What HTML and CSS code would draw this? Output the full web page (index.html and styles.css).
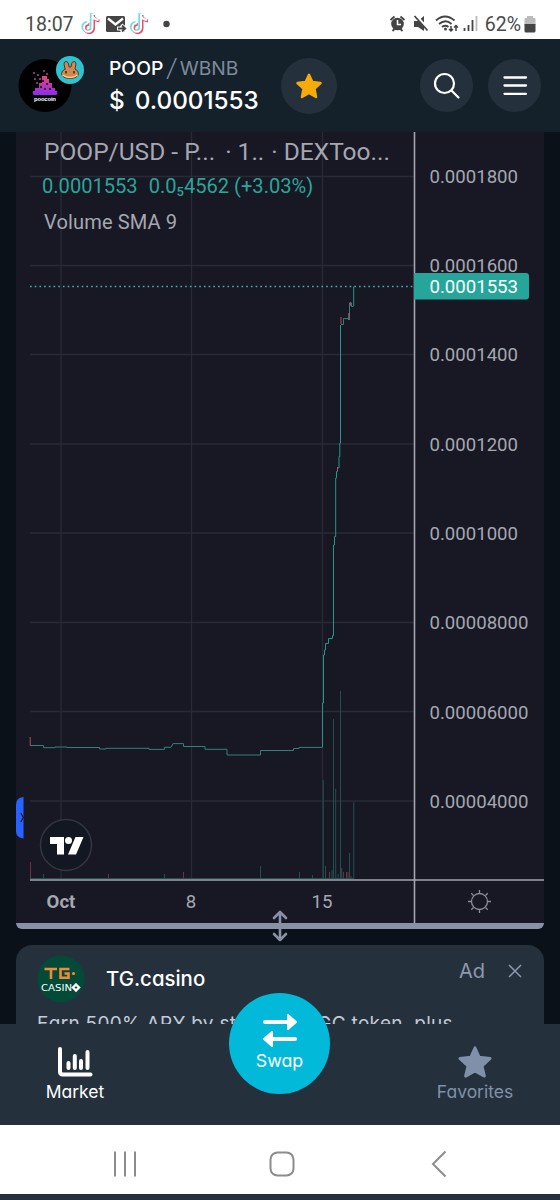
FILE: index.html
```
<!DOCTYPE html>
<html lang="en">
<head>
    <meta charset="UTF-8">
    <meta name="viewport" content="width=device-width, initial-scale=1.0">
    <title>POOP/WBNB</title>
    <link rel="stylesheet" href="styles.css">
</head>
<body>

<!-- Phone status bar -->
<div class="status-bar">
    <span class="clock">18:07</span>
    <svg class="status-left" width="98" height="24" viewBox="80 12 98 24">
        <defs>
            <path id="note" d="M92.500 14V27.500a4.200 4.200 0 1 1-4.200-4.200M92.500 15.500q1 4 6 4.500"/>
        </defs>
        <g fill="none" stroke-width="3">
            <use href="#note" x="-1.200" y="-.7" stroke="#6fdfe0"/>
            <use href="#note" x="1" y="1" stroke="#e8506f"/>
            <use href="#note" stroke="#fff" stroke-width="2"/>
            <use href="#note" x="47.300" y="-.7" stroke="#6fdfe0"/>
            <use href="#note" x="49.500" y="1" stroke="#e8506f"/>
            <use href="#note" x="48.500" stroke="#fff" stroke-width="2"/>
        </g>
        <rect x="106" y="16" width="19" height="16" rx="1.500" fill="#444"/>
        <path d="M108 18.500l7.500 6 7.500-6" fill="none" stroke="#fff" stroke-width="2.400"/>
        <path d="M117 28.500h8m-4-3.500 4 3.500-4 3.500" fill="none" stroke="#fff" stroke-width="4"/>
        <path d="M118 28.500h7m-3-3 3.200 3-3.200 3" fill="none" stroke="#444" stroke-width="1.800"/>
        <circle cx="166.500" cy="24" r="3.200" fill="#444"/>
    </svg>
    <svg class="status-right" width="92" height="24" viewBox="387 12 92 24">
        <g fill="none" stroke="#444" stroke-width="1.800">
            <circle cx="396.500" cy="24" r="6.300" fill="#444" stroke="none"/>
            <path d="M389.500 20l4-3.500M403.500 20l-4-3.500M391.500 31l2-2M401.500 31l-2-2"/>
            <path stroke="#fff" stroke-width="1.500" d="M396.500 20v4.500h3.500"/>
            <path fill="#444" stroke="none" d="M413 21h4l6-5v15l-6-4h-4z"/>
            <path stroke="#fff" stroke-width="3" d="M414.500 15l13 15"/>
            <path d="M413.500 16l13 14.500"/>
            <path d="M435 20.500q9-8 18.500 0M438 24q6.500-5.500 12.500 0M441 27q3.500-2.500 6.500 0"/>
            <path stroke-width="1.500" d="M450 26v5m-2-2 2 2 2-2M455 31v-5.500m-2 2 2-2 2 2"/>
            <path d="M463.500 31v-3M467.500 31v-6M471.500 31V20"/>
            <path stroke="#bbb" d="M475.500 31V16"/>
        </g>
        <circle cx="444.500" cy="29" r="1.500" fill="#444"/>
    </svg>
    <span class="battery-text">62%</span>
    <svg width="12" height="17" viewBox="0 0 12 17">
        <path fill="#bbb" d="M3 0h6v2h1.500a1 1 0 0 1 1 1v6H.5V3a1 1 0 0 1 1-1H3z"/>
        <path fill="#444" d="M.5 8h11v7a1.500 1.500 0 0 1-1.500 1.500H2A1.500 1.500 0 0 1 .5 15z"/>
    </svg>
</div>

<!-- Pair header -->
<header class="header">
    <svg class="token-logo" width="68" height="60" viewBox="17 54 68 60">
        <circle cx="45" cy="85.500" r="26.500" fill="#000"/>
        <defs>
            <linearGradient id="pile" x1="0" y1="0" x2="0" y2="1">
                <stop offset="0" stop-color="#e5486d"/>
                <stop offset="1" stop-color="#8a2cf0"/>
            </linearGradient>
        </defs>
        <path fill="url(#pile)" d="M42 76h5v3h2v4h3v5h3v3h2q1 3-1 4H34q-2-1-1-4h2v-3h4v-5h3z"/>
        <path fill="#8a3176" d="M33 72h2v2h-2zM37 74h2v2h-2zM43 70h2v2h-2zM34 78h2v2h-2zM39 78h2v2h-2zM46 73h2v2h-2zM36 82h2v2h-2z"/>
        <path fill="#3d0f55" d="M42 80h2v2h-2zM46 83h2v2h-2zM40 86h2v2h-2zM49 88h2v2h-2zM44 88h2v2h-2z"/>
        <text class="token-caption" x="45" y="101" text-anchor="middle" textLength="22">poocoin</text>
        <circle cx="70" cy="70" r="14" fill="#2fc3d0"/>
        <path fill="#d2884f" stroke="#5b3524" stroke-width="1" d="M65 69l-1-5q0-2.500 2-2.500t2.500 2.500l.500 3h2l.500-3q.500-2.500 2.500-2.500t2 2.500l-1 5q3.500 1.500 3.500 4.500c0 3-4 5-8.500 5s-8.500-2-8.500-5q0-3 4-4.500z"/>
        <path fill="none" stroke="#f7d190" stroke-width="1.500" d="M62.500 75q7.500 5 15 0"/>
        <path stroke="#4a2b20" stroke-width="1.600" d="M66 71v2.500M74 71v2.500"/>
    </svg>
    <div class="pair">
        <div class="pair-name"><b>POOP</b><i>/</i><span>WBNB</span></div>
        <div class="pair-price"><span>$</span><span class="amount">0.0001553</span></div>
    </div>
    <div class="round-btn fav-btn">
        <svg width="28" height="28" viewBox="0 0 28 28">
            <path fill="#f5ab0b" stroke="#f5ab0b" stroke-width="2.500" stroke-linejoin="round" d="M14 2.800l3.300 7.200 8.200 1-6 5.600 1.500 8.400-7-4.100-7 4.100 1.500-8.400-6-5.600 8.200-1z"/>
        </svg>
    </div>
    <div class="round-btn search-btn">
        <svg width="28" height="28" viewBox="0 0 28 28" fill="none" stroke="#fff" stroke-width="2.200" stroke-linecap="round">
            <circle cx="11.500" cy="11.500" r="9.500"/>
            <path d="M18.500 18.500l7 7"/>
        </svg>
    </div>
    <div class="round-btn">
        <svg width="26" height="22" viewBox="0 0 26 22" stroke="#fff" stroke-width="2.300" stroke-linecap="round">
            <path d="M2.500 2.500h21.500M2.500 10.500h21.500M2.500 18.800h21.500"/>
        </svg>
    </div>
</header>

<main class="content">
    <!-- Price chart -->
    <section class="chart">
        <svg class="plot" width="528" height="791" viewBox="16 132 528 791">
            <g class="grid">
                <path d="M30 176.500H414M30 265.500H414M30 354.500H414M30 444H414M30 533H414M30 622.500H414M30 711.500H414M30 801H414"/>
                <path d="M61 132V879M191.500 132V879M322.500 132V879"/>
            </g>

            <!-- volume -->
            <path class="vol-up" d="M43.500 874v5M164.500 874v5M260.500 866v13M299.500 872v7M312.500 875v4M323.300 780v99M325.500 866v13M332 870v9M333.500 719v160M335.700 789v90M338 874v5M340.500 691v188M343.500 872v7M349.500 853v26M353.800 802v77"/>
            <path class="vol-down" d="M30.500 862v17M108.500 874v5M183.500 872v7M329.500 872v7M341.700 868v11M346.500 872v7M348 872v7M351 876v3"/>
            <path class="vol-up" d="M30 878.500H354"/>

            <!-- price -->
            <path class="price thin" d="M30 745.500H43.500V747.700H55V747H67V747.500H99.500V749H106V748.300H149V749.400H164.500V747.300H171L173 743.600H183.500V746.500H205V749.300H227V755H260.500V750.500H293.500V748.500H299V747.400H322.500"/>
            <path class="price" d="M322.500 747V703H323.500V655H324.500V650H325.500V643.500H328.500V638.500H332.500V635.500H333.500V545H334.500V536.500H335.700V478H336.500V471.500H337.500V468H339V456.500H339.800V443H340.500V325"/>
            <path class="price thin" d="M341 324.500H343.500V318.600H348.500V320M349.500 320V303H351.500V306.500H353.500"/>
            <path class="price" d="M353.700 306V286.500"/>
            <path class="price down" d="M30.200 737v8.500M341 317v7M348.700 313v6M350.300 302v4M337.500 467v3"/>

            <path class="last-line" d="M30 286.500H414"/>
            <path class="axis" d="M414.500 132V923M30 880H544"/>

            <g class="labels">
                <text x="429.500" y="183">0.0001800</text>
                <text x="429.500" y="272">0.0001600</text>
                <text x="429.500" y="361">0.0001400</text>
                <text x="429.500" y="450.500">0.0001200</text>
                <text x="429.500" y="540">0.0001000</text>
                <text x="429.500" y="629">0.00008000</text>
                <text x="429.500" y="718.500">0.00006000</text>
                <text x="429.500" y="807.500">0.00004000</text>
                <text class="strong" x="61" y="908" text-anchor="middle">Oct</text>
                <text x="191" y="908" text-anchor="middle">8</text>
                <text x="322" y="908" text-anchor="middle">15</text>
            </g>
            <path fill="#26a69a" d="M414 273H526a3 3 0 0 1 3 3V296.500a3 3 0 0 1-3 3H414z"/>
            <text class="last-price" x="429.500" y="293">0.0001553</text>

            <!-- axis settings -->
            <g fill="none" stroke="#8b8d98" stroke-width="1.300">
                <circle cx="479.500" cy="901.500" r="8"/>
                <path d="M479.500 893v-3M479.500 910v3M471 901.500h-3M488 901.500h3M473.500 895.500l-2.200-2.200M485.500 895.500l2.200-2.200M473.500 907.500l-2.200 2.200M485.500 907.500l2.200 2.200"/>
            </g>

            <!-- TradingView mark -->
            <circle cx="66" cy="845" r="25.500" fill="#131722" stroke="#34353f" stroke-width="1.500"/>
            <path fill="#fff" d="M50 837H64V854.500H57V844H50zM75.500 837H83.500L76 854.500H68z"/>
            <circle cx="68.500" cy="840.500" r="3.500" fill="#fff"/>

            <!-- drawing panel handle -->
            <path fill="#2962ff" d="M23.500 797V838.500Q16 838 16 831V804.500Q16 797.500 23.500 797z"/>
            <path fill="none" stroke="#131722" stroke-width="1.200" d="M20.800 813l2.500 4.500-2.500 4.500"/>
        </svg>
        <div class="legend">
            <div class="legend-title"><span>POOP/USD - P...</span><span class="interval">· 1..</span><span>· DEXToo...</span></div>
            <div class="legend-values"><span>0.0001553</span><span>0.0<sub>5</sub>4562 (+3.03%)</span></div>
            <div class="legend-volume">Volume SMA 9</div>
        </div>
        <div class="resize-bar">
            <svg class="resize-icon" width="18" height="32" viewBox="0 0 18 32" fill="none" stroke="#8891a8" stroke-width="2.600" stroke-linecap="round" stroke-linejoin="round">
                <path d="M9 2v28M3 8l6-6 6 6M3 24l6 6 6-6"/>
            </svg>
        </div>
    </section>

    <!-- Sponsored card -->
    <section class="ad">
        <div class="ad-head">
            <svg width="48" height="48" viewBox="0 0 48 48">
                <circle cx="24" cy="24" r="23.500" fill="#034a38"/>
                <g fill="none" stroke="#f08a38" stroke-width="2.600">
                    <path d="M7.500 14H20M14 14V24M32.500 14H23.500V22.700H31.500V18.500H27.500"/>
                </g>
                <circle cx="36.500" cy="18.500" r="1.600" fill="#f08a38"/>
                <text class="casino" x="4" y="35.500" textLength="31" lengthAdjust="spacingAndGlyphs">CASIN</text>
                <path fill="none" stroke="#fff" stroke-width="2.400" d="M39 29.500l3 3-3 3-3-3z"/>
            </svg>
            <span class="ad-name">TG.casino</span>
            <span class="ad-tag">Ad</span>
            <svg class="ad-close" width="14" height="14" viewBox="0 0 14 14" stroke="#8f98ac" stroke-width="1.500">
                <path d="M1 1l12 12M13 1L1 13"/>
            </svg>
        </div>
        <p class="ad-text">Earn 500% APY by staking $TGC token, plus</p>
    </section>
</main>

<!-- Bottom tabs -->
<nav class="tabs">
    <div class="tab active">
        <svg width="36" height="32" viewBox="0 0 36 32" fill="none" stroke="#fff" stroke-width="4" stroke-linecap="round" stroke-linejoin="round">
            <path d="M3 3v22.500q0 3 3 3h27.500"/>
            <path d="M11.500 17v5M17.800 10v12M24 15v7M30.500 6v16"/>
        </svg>
        <span>Market</span>
    </div>
    <div class="swap">
        <svg width="36" height="34" viewBox="0 0 36 34" fill="#fff" stroke="#fff" stroke-linecap="round" stroke-linejoin="round">
            <path stroke-width="4" d="M3 9h24M10 26h23"/>
            <path stroke-width="2" d="M26 2l8 7-8 7zM10 19l-8 7 8 7z"/>
        </svg>
        <span>Swap</span>
    </div>
    <div class="tab">
        <svg width="38" height="36" viewBox="0 0 38 36">
            <path fill="#8190aa" stroke="#8190aa" stroke-width="3" stroke-linejoin="round" d="M19 3l4.500 10 11.500 1.200-8.500 8L29 33l-10-5.500L9 33l2.500-10.800-8.500-8L14.500 13z"/>
        </svg>
        <span>Favorites</span>
    </div>
</nav>

<!-- Android navigation -->
<div class="system-nav">
    <svg width="24" height="26" viewBox="0 0 24 26" stroke="#8c8c8c" stroke-width="2">
        <path d="M2 .5v25M12 .5v25M22 .5v25"/>
    </svg>
    <svg class="home" width="26" height="26" viewBox="0 0 26 26" fill="none" stroke="#8c8c8c" stroke-width="2">
        <rect x="1.500" y="1.500" width="23" height="23" rx="7"/>
    </svg>
    <svg width="16" height="28" viewBox="0 0 16 28" fill="none" stroke="#8c8c8c" stroke-width="2">
        <path d="M14.500 1.500L2 14l12.500 12.500"/>
    </svg>
</div>

</body>
</html>
```

FILE: styles.css
```
* {
    box-sizing: border-box;
}

body {
    margin: 0;
    height: 1200px;
    overflow: hidden;
    display: flex;
    flex-direction: column;
    background-color: #24313c;
    font-family: Inter, "Open Sans", sans-serif;
    font-feature-settings: "cv11"; /* single-storey a */
    color: #fff;
}

svg {
    display: block;
    flex-shrink: 0;
}

/* Status bar */
.status-bar {
    height: 39px;
    padding: 9px 24px 0 25px;
    display: flex;
    align-items: center;
    background-color: #fff;
    color: #4a4a4a;
    font-family: Roboto, sans-serif;
    font-size: 19.5px;
}

.clock {
    width: 55px;
}

.status-right {
    margin-left: auto;
}

.battery-text {
    margin: 0 3px 0 5px;
}

/* Header */
.header {
    height: 93px;
    padding: 0 19px 0 17px;
    display: flex;
    align-items: center;
    background-color: #14212a;
}

.token-logo {
    margin-top: -3px;
}

.token-caption {
    font: bold 6px "Liberation Sans", sans-serif;
    fill: #fff;
}

.pair {
    width: 172px;
    margin-top: -2px;
    margin-left: 24px;
}

.pair-name {
    display: flex;
    align-items: center;
    height: 30px;
    font-size: 19.3px;
    color: #7e8a9c;
}

.pair-name b {
    font-weight: 500;
    color: #fff;
}

.pair-name i {
    margin: 0 4px;
    font-size: 24px;
    font-weight: 300;
}

.pair-price {
    display: flex;
    gap: 10px;
    height: 34px;
    line-height: 34px;
    font-size: 24.3px;
    font-weight: 500;
}

.round-btn {
    width: 53px;
    height: 53px;
    border-radius: 50%;
    background-color: #24313c;
    display: flex;
    align-items: center;
    justify-content: center;
}

.fav-btn {
    width: 56px;
    height: 56px;
}

.search-btn {
    margin-left: auto;
    margin-right: 15px;
}

/* Main area */
.content {
    height: 892px;
    padding: 0 16px;
    overflow: hidden;
    background-color: #0a1118;
}

.chart {
    position: relative;
    height: 797px;
    background-color: #171823;
    border-radius: 0 0 8px 8px;
}

.grid {
    fill: none;
    stroke: #282a35;
    stroke-width: 1.3;
}

.axis {
    fill: none;
    stroke: #a3a5af;
    stroke-width: 1.6;
}

.last-line {
    stroke: #48a6ad;
    stroke-width: 1.5;
    stroke-dasharray: 1.7 3;
}

.price {
    fill: none;
    stroke: #26958c;
    stroke-width: 1;
}

.price.thin {
    stroke: #31817f;
}

.price.down {
    stroke: #b94b5c;
}

.vol-up {
    stroke: #1e5052;
    stroke-width: 1;
}

.vol-down {
    stroke: #6b3340;
    stroke-width: 1;
}

.labels text,
.last-price {
    font-family: Roboto, sans-serif;
    font-size: 18.6px;
    fill: #a5a7b1;
}

.labels .strong {
    font-weight: 700;
}

.chart .last-price {
    fill: #fff;
}

.legend {
    position: absolute;
    top: 0;
    left: 28px;
    font-family: Roboto, sans-serif;
    font-size: 20.1px;
    color: #a5a7b1;
    white-space: nowrap;
}

.legend-title {
    display: flex;
    height: 40px;
    line-height: 40px;
    font-size: 24.5px;
}

.interval {
    margin: 0 7px 0 10px;
}

.legend-values {
    display: flex;
    gap: 11px;
    height: 28px;
    margin-left: -2px;
    line-height: 28px;
    color: #2aa59b;
}

.legend-values sub {
    position: relative;
    top: -2px;
    font-size: 13px;
    font-weight: 500;
    line-height: 0;
}

.legend-volume {
    height: 44px;
    line-height: 45px;
    letter-spacing: 0.1px;
}

.resize-bar {
    position: relative;
    height: 6px;
    background-color: #8891a8;
    border-radius: 0 0 8px 8px;
}

.resize-icon {
    position: absolute;
    top: -13px;
    left: 255px;
}

/* Ad card */
.ad {
    margin-top: 16px;
    height: 110px;
    padding: 10px 21px;
    background-color: #24313c;
    border-radius: 16px 16px 0 0;
}

.ad-head {
    display: flex;
    align-items: center;
}

.casino {
    font: 9px "DejaVu Sans", sans-serif;
    fill: #fff;
}

.ad-name {
    margin-top: -2px;
    margin-left: 21px;
    font-size: 20.4px;
    font-weight: 500;
}

.ad-tag {
    margin: -16px 23px 0 auto;
    font-size: 20px;
    color: #8f98ac;
}

.ad-close {
    margin-top: -16px;
    margin-right: 1px;
}

.ad-text {
    margin: 7px 0 0;
    font-size: 19px;
    letter-spacing: 0.3px;
    line-height: 28px;
    color: #c5cbd8;
    white-space: nowrap;
}

/* Bottom tabs */
.tabs {
    height: 101px;
    padding: 0 45px 0 35px;
    display: flex;
    background-color: #24313c;
}

.tab {
    width: 80px;
    padding-top: 21px;
    display: flex;
    flex-direction: column;
    align-items: center;
    font-size: 17.5px;
    color: #8190aa;
}

.tab svg {
    height: 34px;
}

.tab span {
    line-height: 26px;
}

.tab.active {
    color: #fff;
}

.swap {
    width: 101px;
    height: 101px;
    margin: -31px auto 0 114px;
    padding-top: 20px;
    border-radius: 50%;
    background-color: #02b9da;
    position: relative;
    display: flex;
    flex-direction: column;
    align-items: center;
    font-size: 17.8px;
    line-height: 27px;
}

/* Android navigation */
.system-nav {
    height: 69px;
    padding: 9px 113px 0 113px;
    display: flex;
    align-items: center;
    justify-content: space-between;
    background-color: #fff;
}

.home {
    margin-right: 5px;
}
```
